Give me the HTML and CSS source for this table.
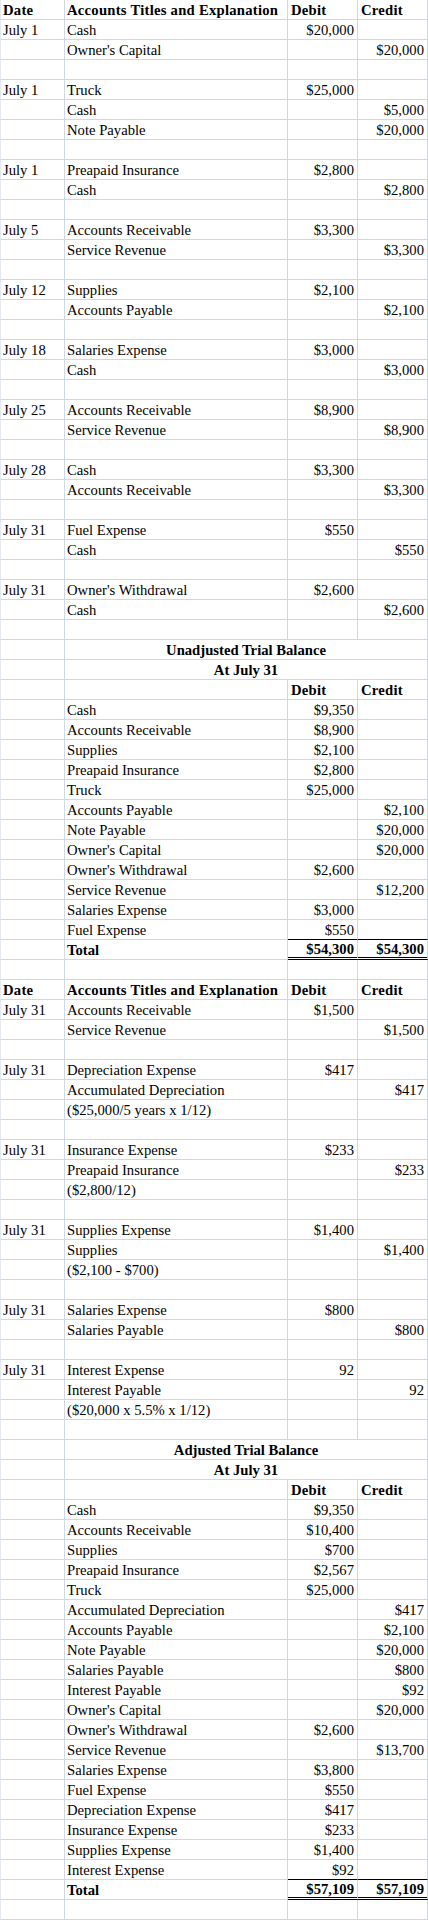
FILE: index.html
```html
<!DOCTYPE html>
<html lang="en">

<head>
    <meta charset="UTF-8">
    <meta name="viewport" content="width=device-width, initial-scale=1.0">
    <title>July Journal and Trial Balance</title>
    <link rel="stylesheet" href="styles.css">
</head>

<body>
    <table class="hoja">
        <colgroup>
            <col class="col-fecha">
            <col class="col-cuenta">
            <col class="col-debe">
            <col class="col-haber">
        </colgroup>
        <tbody>
            <!-- Journal entries -->
            <tr class="encabezado"><td>Date</td><td>Accounts Titles and Explanation</td><td>Debit</td><td>Credit</td></tr>
            <tr><td>July 1</td><td>Cash</td><td class="num">$20,000</td><td></td></tr>
            <tr><td></td><td>Owner's Capital</td><td></td><td class="num">$20,000</td></tr>
            <tr><td></td><td></td><td></td><td></td></tr>
            <tr><td>July 1</td><td>Truck</td><td class="num">$25,000</td><td></td></tr>
            <tr><td></td><td>Cash</td><td></td><td class="num">$5,000</td></tr>
            <tr><td></td><td>Note Payable</td><td></td><td class="num">$20,000</td></tr>
            <tr><td></td><td></td><td></td><td></td></tr>
            <tr><td>July 1</td><td>Preapaid Insurance</td><td class="num">$2,800</td><td></td></tr>
            <tr><td></td><td>Cash</td><td></td><td class="num">$2,800</td></tr>
            <tr><td></td><td></td><td></td><td></td></tr>
            <tr><td>July 5</td><td>Accounts Receivable</td><td class="num">$3,300</td><td></td></tr>
            <tr><td></td><td>Service Revenue</td><td></td><td class="num">$3,300</td></tr>
            <tr><td></td><td></td><td></td><td></td></tr>
            <tr><td>July 12</td><td>Supplies</td><td class="num">$2,100</td><td></td></tr>
            <tr><td></td><td>Accounts Payable</td><td></td><td class="num">$2,100</td></tr>
            <tr><td></td><td></td><td></td><td></td></tr>
            <tr><td>July 18</td><td>Salaries Expense</td><td class="num">$3,000</td><td></td></tr>
            <tr><td></td><td>Cash</td><td></td><td class="num">$3,000</td></tr>
            <tr><td></td><td></td><td></td><td></td></tr>
            <tr><td>July 25</td><td>Accounts Receivable</td><td class="num">$8,900</td><td></td></tr>
            <tr><td></td><td>Service Revenue</td><td></td><td class="num">$8,900</td></tr>
            <tr><td></td><td></td><td></td><td></td></tr>
            <tr><td>July 28</td><td>Cash</td><td class="num">$3,300</td><td></td></tr>
            <tr><td></td><td>Accounts Receivable</td><td></td><td class="num">$3,300</td></tr>
            <tr><td></td><td></td><td></td><td></td></tr>
            <tr><td>July 31</td><td>Fuel Expense</td><td class="num">$550</td><td></td></tr>
            <tr><td></td><td>Cash</td><td></td><td class="num">$550</td></tr>
            <tr><td></td><td></td><td></td><td></td></tr>
            <tr><td>July 31</td><td>Owner's Withdrawal</td><td class="num">$2,600</td><td></td></tr>
            <tr><td></td><td>Cash</td><td></td><td class="num">$2,600</td></tr>
            <tr><td></td><td></td><td></td><td></td></tr>

            <!-- Unadjusted trial balance -->
            <tr><td></td><td class="titulo" colspan="3">Unadjusted Trial Balance</td></tr>
            <tr><td></td><td class="titulo" colspan="3">At July 31</td></tr>
            <tr class="encabezado"><td></td><td></td><td>Debit</td><td>Credit</td></tr>
            <tr><td></td><td>Cash</td><td class="num">$9,350</td><td></td></tr>
            <tr><td></td><td>Accounts Receivable</td><td class="num">$8,900</td><td></td></tr>
            <tr><td></td><td>Supplies</td><td class="num">$2,100</td><td></td></tr>
            <tr><td></td><td>Preapaid Insurance</td><td class="num">$2,800</td><td></td></tr>
            <tr><td></td><td>Truck</td><td class="num">$25,000</td><td></td></tr>
            <tr><td></td><td>Accounts Payable</td><td></td><td class="num">$2,100</td></tr>
            <tr><td></td><td>Note Payable</td><td></td><td class="num">$20,000</td></tr>
            <tr><td></td><td>Owner's Capital</td><td></td><td class="num">$20,000</td></tr>
            <tr><td></td><td>Owner's Withdrawal</td><td class="num">$2,600</td><td></td></tr>
            <tr><td></td><td>Service Revenue</td><td></td><td class="num">$12,200</td></tr>
            <tr><td></td><td>Salaries Expense</td><td class="num">$3,000</td><td></td></tr>
            <tr class="antes-total"><td></td><td>Fuel Expense</td><td class="num">$550</td><td></td></tr>
            <tr class="total"><td></td><td>Total</td><td class="num">$54,300</td><td class="num">$54,300</td></tr>
            <tr><td></td><td></td><td></td><td></td></tr>

            <!-- Adjusting entries -->
            <tr class="encabezado"><td>Date</td><td>Accounts Titles and Explanation</td><td>Debit</td><td>Credit</td></tr>
            <tr><td>July 31</td><td>Accounts Receivable</td><td class="num">$1,500</td><td></td></tr>
            <tr><td></td><td>Service Revenue</td><td></td><td class="num">$1,500</td></tr>
            <tr><td></td><td></td><td></td><td></td></tr>
            <tr><td>July 31</td><td>Depreciation Expense</td><td class="num">$417</td><td></td></tr>
            <tr><td></td><td>Accumulated Depreciation</td><td></td><td class="num">$417</td></tr>
            <tr><td></td><td>($25,000/5 years x 1/12)</td><td></td><td></td></tr>
            <tr><td></td><td></td><td></td><td></td></tr>
            <tr><td>July 31</td><td>Insurance Expense</td><td class="num">$233</td><td></td></tr>
            <tr><td></td><td>Preapaid Insurance</td><td></td><td class="num">$233</td></tr>
            <tr><td></td><td>($2,800/12)</td><td></td><td></td></tr>
            <tr><td></td><td></td><td></td><td></td></tr>
            <tr><td>July 31</td><td>Supplies Expense</td><td class="num">$1,400</td><td></td></tr>
            <tr><td></td><td>Supplies</td><td></td><td class="num">$1,400</td></tr>
            <tr><td></td><td>($2,100 - $700)</td><td></td><td></td></tr>
            <tr><td></td><td></td><td></td><td></td></tr>
            <tr><td>July 31</td><td>Salaries Expense</td><td class="num">$800</td><td></td></tr>
            <tr><td></td><td>Salaries Payable</td><td></td><td class="num">$800</td></tr>
            <tr><td></td><td></td><td></td><td></td></tr>
            <tr><td>July 31</td><td>Interest Expense</td><td class="num">92</td><td></td></tr>
            <tr><td></td><td>Interest Payable</td><td></td><td class="num">92</td></tr>
            <tr><td></td><td>($20,000 x 5.5% x 1/12)</td><td></td><td></td></tr>
            <tr><td></td><td></td><td></td><td></td></tr>

            <!-- Adjusted trial balance -->
            <tr><td></td><td class="titulo" colspan="3">Adjusted Trial Balance</td></tr>
            <tr><td></td><td class="titulo" colspan="3">At July 31</td></tr>
            <tr class="encabezado"><td></td><td></td><td>Debit</td><td>Credit</td></tr>
            <tr><td></td><td>Cash</td><td class="num">$9,350</td><td></td></tr>
            <tr><td></td><td>Accounts Receivable</td><td class="num">$10,400</td><td></td></tr>
            <tr><td></td><td>Supplies</td><td class="num">$700</td><td></td></tr>
            <tr><td></td><td>Preapaid Insurance</td><td class="num">$2,567</td><td></td></tr>
            <tr><td></td><td>Truck</td><td class="num">$25,000</td><td></td></tr>
            <tr><td></td><td>Accumulated Depreciation</td><td></td><td class="num">$417</td></tr>
            <tr><td></td><td>Accounts Payable</td><td></td><td class="num">$2,100</td></tr>
            <tr><td></td><td>Note Payable</td><td></td><td class="num">$20,000</td></tr>
            <tr><td></td><td>Salaries Payable</td><td></td><td class="num">$800</td></tr>
            <tr><td></td><td>Interest Payable</td><td></td><td class="num">$92</td></tr>
            <tr><td></td><td>Owner's Capital</td><td></td><td class="num">$20,000</td></tr>
            <tr><td></td><td>Owner's Withdrawal</td><td class="num">$2,600</td><td></td></tr>
            <tr><td></td><td>Service Revenue</td><td></td><td class="num">$13,700</td></tr>
            <tr><td></td><td>Salaries Expense</td><td class="num">$3,800</td><td></td></tr>
            <tr><td></td><td>Fuel Expense</td><td class="num">$550</td><td></td></tr>
            <tr><td></td><td>Depreciation Expense</td><td class="num">$417</td><td></td></tr>
            <tr><td></td><td>Insurance Expense</td><td class="num">$233</td><td></td></tr>
            <tr><td></td><td>Supplies Expense</td><td class="num">$1,400</td><td></td></tr>
            <tr class="antes-total"><td></td><td>Interest Expense</td><td class="num">$92</td><td></td></tr>
            <tr class="total"><td></td><td>Total</td><td class="num">$57,109</td><td class="num">$57,109</td></tr>
            <tr><td></td><td></td><td></td><td></td></tr>
        </tbody>
    </table>
</body>

</html>
```

FILE: styles.css
```css
body {
    margin: 0;
    background-color: white;
    font-family: "Liberation Serif", "Times New Roman", serif;
    font-size: 11pt;
    color: black;
}

.hoja {
    border-collapse: separate;
    border-spacing: 0;
    table-layout: fixed;
    width: 428px;
}

.col-fecha {
    width: 65px;
}

.col-cuenta {
    width: 223px;
}

.col-debe,
.col-haber {
    width: 70px;
}

.hoja tr {
    height: 20px;
}

.hoja td {
    padding: 0 2px 0 3px;
    border-right: 1px solid #d0d7e5;
    border-bottom: 1px solid #d0d7e5;
    line-height: 17px;
    vertical-align: bottom;
    white-space: nowrap;
    overflow: hidden;
}

.hoja td:first-child {
    border-left: 1px solid #e4e8f0;
    padding-left: 2px;
}

.hoja td:nth-child(2) {
    padding-left: 2px;
}

.hoja td.num {
    text-align: right;
    padding-right: 3px;
}

.encabezado td,
.titulo,
.total td {
    font-weight: bold;
}

.encabezado td {
    letter-spacing: 0.25px;
}

.titulo {
    text-align: center;
}

/* single line above the totals, double line under them */
.antes-total td:nth-child(3),
.antes-total td:nth-child(4) {
    border-bottom-color: black;
}

.total td:nth-child(3),
.total td:nth-child(4) {
    border-bottom: 3px double black;
    line-height: 16px;
}
```
